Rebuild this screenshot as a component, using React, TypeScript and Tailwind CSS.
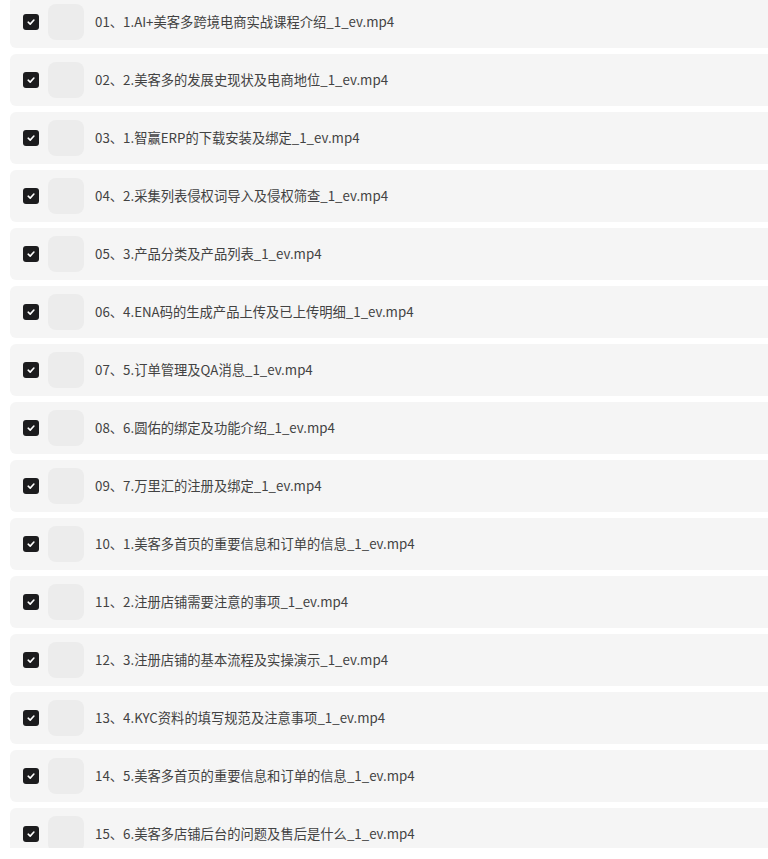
import React from "react";

const items = [
  "01、1.AI+美客多跨境电商实战课程介绍_1_ev.mp4",
  "02、2.美客多的发展史现状及电商地位_1_ev.mp4",
  "03、1.智赢ERP的下载安装及绑定_1_ev.mp4",
  "04、2.采集列表侵权词导入及侵权筛查_1_ev.mp4",
  "05、3.产品分类及产品列表_1_ev.mp4",
  "06、4.ENA码的生成产品上传及已上传明细_1_ev.mp4",
  "07、5.订单管理及QA消息_1_ev.mp4",
  "08、6.圆佑的绑定及功能介绍_1_ev.mp4",
  "09、7.万里汇的注册及绑定_1_ev.mp4",
  "10、1.美客多首页的重要信息和订单的信息_1_ev.mp4",
  "11、2.注册店铺需要注意的事项_1_ev.mp4",
  "12、3.注册店铺的基本流程及实操演示_1_ev.mp4",
  "13、4.KYC资料的填写规范及注意事项_1_ev.mp4",
  "14、5.美客多首页的重要信息和订单的信息_1_ev.mp4",
  "15、6.美客多店铺后台的问题及售后是什么_1_ev.mp4",
];

function Check() {
  return (
    <div className="w-[16px] h-[16px] rounded-[3px] bg-[#1c1c1e] flex items-center justify-center shrink-0">
      <svg width="10" height="10" viewBox="0 0 10 10" fill="none">
        <path d="M2.2 5.2 L4.2 7.1 L7.9 3" stroke="white" strokeWidth="1.6" strokeLinecap="round" strokeLinejoin="round" />
      </svg>
    </div>
  );
}

export default function App() {
  return (
    <div className="w-[768px] h-[859px] bg-white overflow-hidden" style={{ fontFamily: '"Noto Sans CJK SC", "Noto Sans", sans-serif' }}>
      <div className="h-[848px] overflow-hidden pl-[10px]">
        <div className="flex flex-col gap-[6px] -mt-[4px]">
          {items.map((t) => (
            <div key={t} className="h-[52px] bg-[#f5f5f5] rounded-l-[6px] flex items-center pl-[13px]">
              <Check />
              <div className="w-[36px] h-[36px] rounded-[8px] bg-[#ececec] ml-[9px] shrink-0" />
              <div className="ml-[11px] text-[13.3px] text-[#424242] whitespace-nowrap">{t}</div>
            </div>
          ))}
        </div>
      </div>
    </div>
  );
}
